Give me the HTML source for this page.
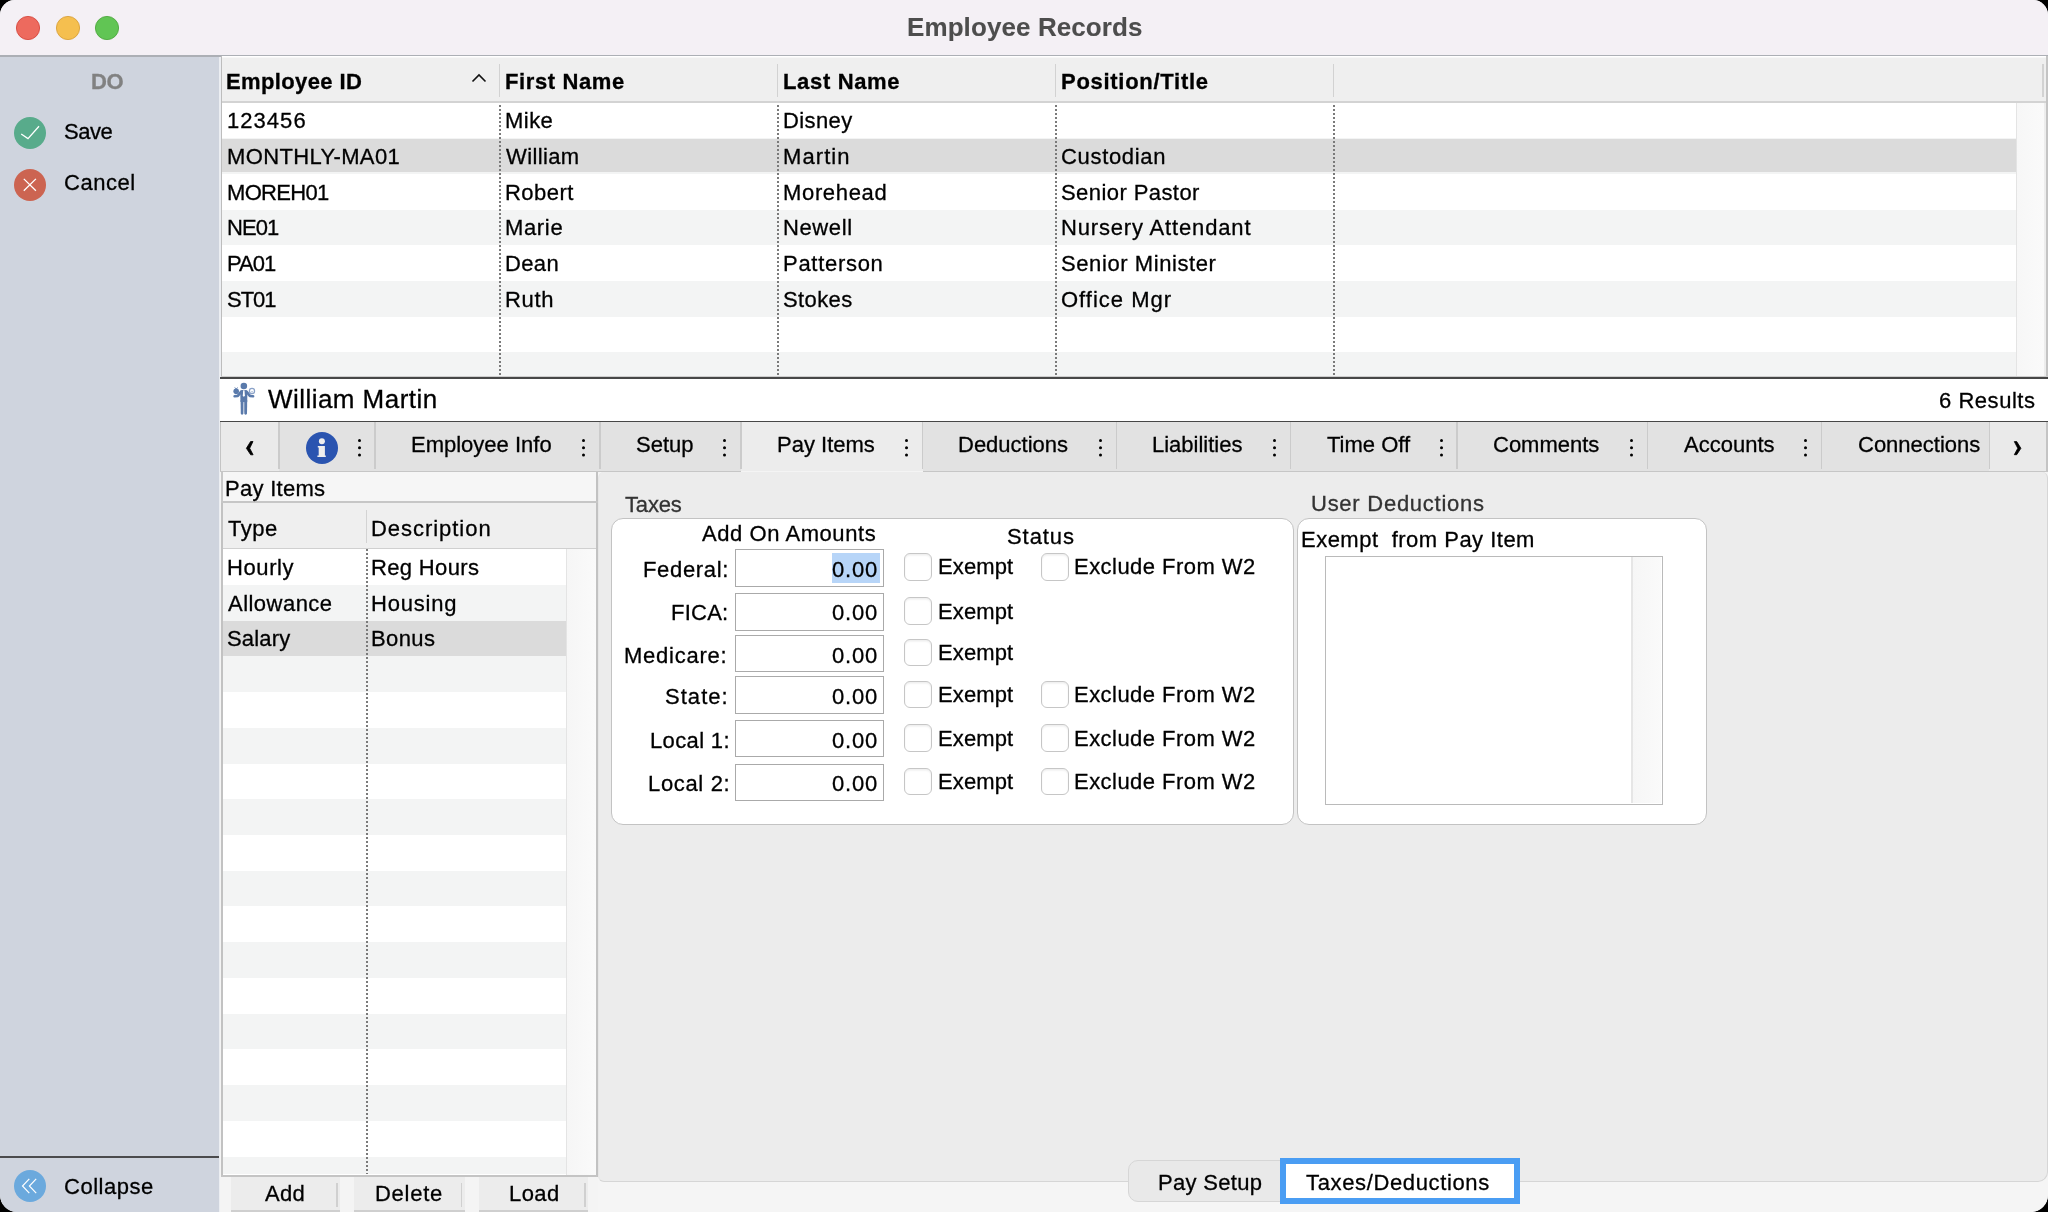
<!DOCTYPE html>
<html><head><meta charset="utf-8">
<style>
*{box-sizing:border-box;margin:0;padding:0}
html,body{width:2048px;height:1212px;overflow:hidden;background:#000}
body{font-family:"Liberation Sans",sans-serif;font-size:22px;color:#000;position:relative}
.a{position:absolute}
.t{position:absolute;white-space:nowrap;line-height:1.15;-webkit-text-stroke:0.3px currentColor;will-change:transform}
#win{position:absolute;left:0;top:0;width:2048px;height:1212px;border-radius:15px 15px 17px 17px;overflow:hidden;background:#f4f4f4}
.dots{position:absolute;width:3px;height:3px;border-radius:50%;background:#000;box-shadow:0 7.2px 0 #000,0 14.4px 0 #000}
.vd{position:absolute;width:2px;background-image:linear-gradient(to bottom,#7a7a7a 0,#7a7a7a 2px,transparent 2px);background-size:2px 4px}
.cb{position:absolute;width:27.6px;height:27.6px;border-radius:6px;background:#fff;border:1px solid #c6c6c6;box-shadow:inset 0 1.5px 2px rgba(0,0,0,0.07)}
</style></head><body>
<div id="win">
<div class="a" style="left:0.00px;top:0.00px;width:2048.00px;height:56.00px;background:#f4f0f5"></div>
<div class="a" style="left:0.00px;top:55.30px;width:2048.00px;height:1.60px;background:#acafb5"></div>
<svg class="a" style="left:14.90px;top:15px" width="26" height="26" viewBox="0 0 26 26"><circle cx="13" cy="13" r="11.6" fill="#ed6a5e" stroke="#d6493f" stroke-width="0.9"/></svg>
<svg class="a" style="left:54.60px;top:15px" width="26" height="26" viewBox="0 0 26 26"><circle cx="13" cy="13" r="11.6" fill="#f5bf4f" stroke="#d9a23c" stroke-width="0.9"/></svg>
<svg class="a" style="left:94.20px;top:15px" width="26" height="26" viewBox="0 0 26 26"><circle cx="13" cy="13" r="11.6" fill="#61c554" stroke="#4fa83f" stroke-width="0.9"/></svg>
<div class="t" style="left:906.80px;top:12.64px;font-size:26px;font-weight:700;color:#4d4d4d;letter-spacing:0.093px;-webkit-text-stroke:0.1px currentColor">Employee Records</div>
<div class="a" style="left:0.00px;top:57.00px;width:219.00px;height:1155.00px;background:#cfd4de"></div>
<div class="a" style="left:219.00px;top:57.00px;width:2.00px;height:1155.00px;background:#eceef2"></div>
<div class="t" style="left:91.40px;top:68.73px;font-size:22px;font-weight:700;color:#818181;letter-spacing:-0.300px;">DO</div>
<svg class="a" style="left:14px;top:117px" width="32" height="32" viewBox="0 0 32 32"><circle cx="16" cy="16" r="16" fill="#58ab8b"/><path d="M7.2 17 L14 21.6 L25 9.2" fill="none" stroke="#fff" stroke-width="1.3"/></svg>
<div class="t" style="left:63.70px;top:118.93px;font-size:22px;font-weight:400;color:#000;letter-spacing:-0.500px;">Save</div>
<svg class="a" style="left:14px;top:168.5px" width="32" height="32" viewBox="0 0 32 32"><circle cx="16" cy="16" r="16" fill="#cc6451"/><path d="M9.8 9.9 L21.9 21.8 M21.9 9.9 L9.8 21.8" fill="none" stroke="#fff" stroke-width="1.3"/></svg>
<div class="t" style="left:63.70px;top:170.43px;font-size:22px;font-weight:400;color:#000;letter-spacing:0.540px;">Cancel</div>
<div class="a" style="left:0.00px;top:1156.00px;width:219.00px;height:2.00px;background:#4b4b4d"></div>
<svg class="a" style="left:14px;top:1170px" width="32" height="32" viewBox="0 0 32 32"><circle cx="16" cy="16" r="16" fill="#6ba9dd"/><path d="M15.3 8.8 L8.5 16 L15.3 23.2 M22.2 8.8 L15.4 16 L22.2 23.2" fill="none" stroke="#fff" stroke-width="1.2"/></svg>
<div class="t" style="left:63.60px;top:1173.73px;font-size:22px;font-weight:400;color:#000;letter-spacing:0.514px;">Collapse</div>
<div class="a" style="left:220.50px;top:56.00px;width:1827.50px;height:321.00px;background:#fff"></div>
<div class="a" style="left:220.50px;top:57.00px;width:1827.50px;height:44.50px;background:#efefef"></div>
<div class="a" style="left:220.50px;top:57.00px;width:1827.50px;height:1.20px;background:#f7f7f7"></div>
<div class="a" style="left:220.50px;top:101.00px;width:1827.50px;height:1.50px;background:#d3d3d3"></div>
<div class="a" style="left:220.50px;top:56.00px;width:1.50px;height:321.00px;background:#bdbdbd"></div>
<div class="a" style="left:2044.00px;top:102.50px;width:2.00px;height:274.50px;background:#ededed"></div>
<div class="a" style="left:2046.00px;top:56.00px;width:2.00px;height:321.00px;background:#c4c4c4"></div>
<div class="a" style="left:498.90px;top:64.00px;width:1.50px;height:33.00px;background:#d2d2d2"></div>
<div class="a" style="left:776.80px;top:64.00px;width:1.50px;height:33.00px;background:#d2d2d2"></div>
<div class="a" style="left:1054.90px;top:64.00px;width:1.50px;height:33.00px;background:#d2d2d2"></div>
<div class="a" style="left:1332.80px;top:64.00px;width:1.50px;height:33.00px;background:#d2d2d2"></div>
<div class="a" style="left:2042.00px;top:64.00px;width:1.50px;height:33.00px;background:#d2d2d2"></div>
<div class="t" style="left:226.30px;top:68.53px;font-size:22px;font-weight:700;color:#000;letter-spacing:0.380px;">Employee ID</div>
<div class="t" style="left:504.90px;top:68.53px;font-size:22px;font-weight:700;color:#000;letter-spacing:0.611px;">First Name</div>
<div class="t" style="left:782.60px;top:68.53px;font-size:22px;font-weight:700;color:#000;letter-spacing:0.662px;">Last Name</div>
<div class="t" style="left:1060.80px;top:68.53px;font-size:22px;font-weight:700;color:#000;letter-spacing:0.715px;">Position/Title</div>
<svg class="a" style="left:471px;top:73px" width="16" height="10" viewBox="0 0 16 10"><path d="M1.5 8.5 L8 2 L14.5 8.5" fill="none" stroke="#111" stroke-width="1.6"/></svg>
<div class="a" style="left:222.00px;top:102.50px;width:1794.50px;height:35.70px;background:#ffffff"></div>
<div class="t" style="left:226.50px;top:108.33px;font-size:22px;font-weight:400;color:#000;letter-spacing:1.040px;">123456</div>
<div class="t" style="left:504.90px;top:108.33px;font-size:22px;font-weight:400;color:#000;letter-spacing:0.467px;">Mike</div>
<div class="t" style="left:782.60px;top:108.33px;font-size:22px;font-weight:400;color:#000;letter-spacing:0.400px;">Disney</div>
<div class="a" style="left:222.00px;top:138.20px;width:1794.50px;height:35.70px;background:#f3f4f4"></div>
<div class="a" style="left:222.00px;top:139.00px;width:1794.50px;height:33.40px;background:#dbdbdb"></div>
<div class="t" style="left:226.50px;top:144.03px;font-size:22px;font-weight:400;color:#000;letter-spacing:0.364px;">MONTHLY-MA01</div>
<div class="t" style="left:505.90px;top:144.03px;font-size:22px;font-weight:400;color:#000;letter-spacing:0.367px;">William</div>
<div class="t" style="left:782.60px;top:144.03px;font-size:22px;font-weight:400;color:#000;letter-spacing:1.080px;">Martin</div>
<div class="t" style="left:1060.80px;top:144.03px;font-size:22px;font-weight:400;color:#000;letter-spacing:0.675px;">Custodian</div>
<div class="a" style="left:222.00px;top:173.90px;width:1794.50px;height:35.70px;background:#ffffff"></div>
<div class="t" style="left:226.50px;top:179.73px;font-size:22px;font-weight:400;color:#000;letter-spacing:-0.683px;">MOREH01</div>
<div class="t" style="left:504.90px;top:179.73px;font-size:22px;font-weight:400;color:#000;letter-spacing:0.460px;">Robert</div>
<div class="t" style="left:782.60px;top:179.73px;font-size:22px;font-weight:400;color:#000;letter-spacing:0.657px;">Morehead</div>
<div class="t" style="left:1060.80px;top:179.73px;font-size:22px;font-weight:400;color:#000;letter-spacing:0.425px;">Senior Pastor</div>
<div class="a" style="left:222.00px;top:209.60px;width:1794.50px;height:35.70px;background:#f3f4f4"></div>
<div class="t" style="left:226.50px;top:215.43px;font-size:22px;font-weight:400;color:#000;letter-spacing:-0.967px;">NE01</div>
<div class="t" style="left:504.90px;top:215.43px;font-size:22px;font-weight:400;color:#000;letter-spacing:0.650px;">Marie</div>
<div class="t" style="left:782.60px;top:215.43px;font-size:22px;font-weight:400;color:#000;letter-spacing:0.600px;">Newell</div>
<div class="t" style="left:1060.80px;top:215.43px;font-size:22px;font-weight:400;color:#000;letter-spacing:0.838px;">Nursery Attendant</div>
<div class="a" style="left:222.00px;top:245.30px;width:1794.50px;height:35.70px;background:#ffffff"></div>
<div class="t" style="left:226.50px;top:251.13px;font-size:22px;font-weight:400;color:#000;letter-spacing:-1.000px;">PA01</div>
<div class="t" style="left:504.90px;top:251.13px;font-size:22px;font-weight:400;color:#000;letter-spacing:0.367px;">Dean</div>
<div class="t" style="left:782.60px;top:251.13px;font-size:22px;font-weight:400;color:#000;letter-spacing:0.706px;">Patterson</div>
<div class="t" style="left:1060.80px;top:251.13px;font-size:22px;font-weight:400;color:#000;letter-spacing:0.586px;">Senior Minister</div>
<div class="a" style="left:222.00px;top:281.00px;width:1794.50px;height:35.70px;background:#f3f4f4"></div>
<div class="t" style="left:226.50px;top:286.83px;font-size:22px;font-weight:400;color:#000;letter-spacing:-1.000px;">ST01</div>
<div class="t" style="left:504.90px;top:286.83px;font-size:22px;font-weight:400;color:#000;letter-spacing:0.633px;">Ruth</div>
<div class="t" style="left:782.60px;top:286.83px;font-size:22px;font-weight:400;color:#000;letter-spacing:0.400px;">Stokes</div>
<div class="t" style="left:1060.80px;top:286.83px;font-size:22px;font-weight:400;color:#000;letter-spacing:1.000px;">Office Mgr</div>
<div class="a" style="left:222.00px;top:316.70px;width:1794.50px;height:35.70px;background:#ffffff"></div>
<div class="a" style="left:222.00px;top:352.40px;width:1794.50px;height:24.60px;background:#f3f4f4"></div>
<div class="vd" style="left:498.5px;top:105px;height:272px"></div>
<div class="vd" style="left:776.5px;top:105px;height:272px"></div>
<div class="vd" style="left:1054.5px;top:105px;height:272px"></div>
<div class="vd" style="left:1332.5px;top:105px;height:272px"></div>
<div class="a" style="left:2016.50px;top:102.50px;width:27.50px;height:274.50px;background:linear-gradient(to right,#f7f7f7,#fafafa)"></div>
<div class="a" style="left:2016.00px;top:102.50px;width:1.20px;height:274.50px;background:#e4e4e4"></div>
<div class="a" style="left:220.50px;top:375.50px;width:1827.50px;height:1.40px;background:#cdcdcd"></div>
<div class="a" style="left:219.50px;top:376.80px;width:1828.50px;height:2.00px;background:#474747"></div>
<div class="a" style="left:219.50px;top:378.80px;width:1828.50px;height:42.00px;background:#fff"></div>
<div class="a" style="left:219.50px;top:420.60px;width:1828.50px;height:2.00px;background:#474747"></div>
<svg class="a" style="left:228px;top:380px" width="34" height="38" viewBox="0 0 34 38">
<g fill="#5a7aab">
<circle cx="15.85" cy="6" r="3.3"/>
<path d="M12.2 12.2 Q12.2 10 14.4 10 L17.3 10 Q19.4 10 19.4 12.2 L19.2 22 L12.5 22 Z"/>
<path d="M12.6 20 L15.5 20 L15.4 33.8 Q14 35.6 12.8 33.8 Z"/>
<path d="M16.2 20 L19.2 20 L19 33.8 Q17.7 35.6 16.3 33.8 Z"/>
<circle cx="8.2" cy="11.3" r="2.8"/>
<path d="M6.6 7.6 L8.2 8.8 L9.8 7.6" fill="none" stroke="#5a7aab" stroke-width="0.9"/>
</g>
<path d="M13.2 11.6 L9.8 15.9 L6.6 16.3 M18.5 11.6 L21.9 15.9 L25.1 16.3" fill="none" stroke="#5a7aab" stroke-width="2.6" stroke-linecap="round" stroke-linejoin="round"/>
<path d="M15.2 10.3 L16.5 10.3 L16.9 15.6 L15.85 17.1 L14.8 15.6 Z" fill="#fff"/>
<circle cx="24" cy="10.9" r="2.6" fill="none" stroke="#8aa2c8" stroke-width="1.2"/>
<path d="M23.2 11.6 L24.1 12.1 L25.2 11.2" fill="none" stroke="#8aa2c8" stroke-width="0.8"/>
</svg>
<div class="t" style="left:268.40px;top:384.84px;font-size:26px;font-weight:400;color:#000;letter-spacing:0.454px;">William Martin</div>
<div class="t" style="left:1938.70px;top:388.43px;font-size:22px;font-weight:400;color:#000;letter-spacing:0.537px;">6 Results</div>
<div class="a" style="left:219.50px;top:422.40px;width:1828.50px;height:48.60px;background:#e2e2e2"></div>
<div class="a" style="left:219.50px;top:422.40px;width:1.50px;height:48.60px;background:#c4c4c4"></div>
<div class="a" style="left:221.00px;top:422.40px;width:58.00px;height:48.60px;background:#eaeaea"></div>
<div class="a" style="left:279.00px;top:422.40px;width:96.00px;height:48.60px;background:#e2e2e2"></div>
<div class="a" style="left:375.00px;top:422.40px;width:225.00px;height:48.60px;background:#e2e2e2"></div>
<div class="a" style="left:600.00px;top:422.40px;width:141.00px;height:48.60px;background:#e2e2e2"></div>
<div class="a" style="left:741.00px;top:422.40px;width:181.50px;height:48.60px;background:#ececec"></div>
<div class="a" style="left:922.50px;top:422.40px;width:194.00px;height:48.60px;background:#e2e2e2"></div>
<div class="a" style="left:1116.50px;top:422.40px;width:173.80px;height:48.60px;background:#e2e2e2"></div>
<div class="a" style="left:1290.30px;top:422.40px;width:166.70px;height:48.60px;background:#e2e2e2"></div>
<div class="a" style="left:1457.00px;top:422.40px;width:190.70px;height:48.60px;background:#e2e2e2"></div>
<div class="a" style="left:1647.70px;top:422.40px;width:173.70px;height:48.60px;background:#e2e2e2"></div>
<div class="a" style="left:1821.40px;top:422.40px;width:167.90px;height:48.60px;background:#e2e2e2"></div>
<div class="a" style="left:1989.30px;top:422.40px;width:56.70px;height:48.60px;background:#eaeaea"></div>
<div class="a" style="left:278.25px;top:422.40px;width:1.50px;height:47.10px;background:#cbcbcb"></div>
<div class="a" style="left:374.25px;top:422.40px;width:1.50px;height:47.10px;background:#cbcbcb"></div>
<div class="a" style="left:599.25px;top:422.40px;width:1.50px;height:47.10px;background:#cbcbcb"></div>
<div class="a" style="left:740.25px;top:422.40px;width:1.50px;height:47.10px;background:#cbcbcb"></div>
<div class="a" style="left:921.75px;top:422.40px;width:1.50px;height:47.10px;background:#cbcbcb"></div>
<div class="a" style="left:1115.75px;top:422.40px;width:1.50px;height:47.10px;background:#cbcbcb"></div>
<div class="a" style="left:1289.55px;top:422.40px;width:1.50px;height:47.10px;background:#cbcbcb"></div>
<div class="a" style="left:1456.25px;top:422.40px;width:1.50px;height:47.10px;background:#cbcbcb"></div>
<div class="a" style="left:1646.95px;top:422.40px;width:1.50px;height:47.10px;background:#cbcbcb"></div>
<div class="a" style="left:1820.65px;top:422.40px;width:1.50px;height:47.10px;background:#cbcbcb"></div>
<div class="a" style="left:1988.55px;top:422.40px;width:1.50px;height:47.10px;background:#cbcbcb"></div>
<div class="a" style="left:2045.50px;top:422.40px;width:2.50px;height:48.60px;background:#c4c4c4"></div>
<div class="a" style="left:219.50px;top:470.50px;width:521.50px;height:1.80px;background:#c6c6c6"></div>
<div class="a" style="left:922.50px;top:470.50px;width:1125.50px;height:1.80px;background:#c6c6c6"></div>
<svg class="a" style="left:236px;top:430px" width="30" height="36" viewBox="0 0 30 36"><path d="M14.6 11.5 L17.0 11.5 L13.7 18.3 L17.1 24.8 L14.7 24.8 L10.4 18.3 Z" fill="#000" stroke="#000" stroke-width="0.8" stroke-linejoin="round"/></svg>
<svg class="a" style="left:2003px;top:430px" width="30" height="36" viewBox="0 0 30 36"><path d="M11.3 11.6 L13.7 11.6 L17.9 18.3 L13.7 24.7 L11.3 24.7 L14.8 18.3 Z" fill="#000" stroke="#000" stroke-width="0.8" stroke-linejoin="round"/></svg>
<svg class="a" style="left:306px;top:432px" width="32" height="32" viewBox="0 0 32 32"><circle cx="16" cy="16" r="16" fill="#2a54b0"/><circle cx="15.9" cy="9.3" r="3" fill="#eee"/><path d="M11.8 14 L18.9 14 L18.9 23.4 L19.8 23.4 L19.8 25 L11.4 25 L11.4 23.4 L12.7 23.4 L12.7 15.6 L11.8 15.6 Z" fill="#eee"/></svg>
<div class="dots" style="left:358.10px;top:438.90px"></div>
<div class="dots" style="left:581.50px;top:438.90px"></div>
<div class="dots" style="left:723.10px;top:438.90px"></div>
<div class="dots" style="left:905.10px;top:438.90px"></div>
<div class="dots" style="left:1098.50px;top:438.90px"></div>
<div class="dots" style="left:1272.90px;top:438.90px"></div>
<div class="dots" style="left:1439.50px;top:438.90px"></div>
<div class="dots" style="left:1629.50px;top:438.90px"></div>
<div class="dots" style="left:1804.10px;top:438.90px"></div>
<div class="t" style="left:411.00px;top:432.13px;font-size:22px;font-weight:400;color:#000;">Employee Info</div>
<div class="t" style="left:635.50px;top:432.13px;font-size:22px;font-weight:400;color:#000;">Setup</div>
<div class="t" style="left:777.00px;top:432.13px;font-size:22px;font-weight:400;color:#000;">Pay Items</div>
<div class="t" style="left:958.00px;top:432.13px;font-size:22px;font-weight:400;color:#000;">Deductions</div>
<div class="t" style="left:1151.50px;top:432.13px;font-size:22px;font-weight:400;color:#000;">Liabilities</div>
<div class="t" style="left:1326.50px;top:432.13px;font-size:22px;font-weight:400;color:#000;">Time Off</div>
<div class="t" style="left:1493.00px;top:432.13px;font-size:22px;font-weight:400;color:#000;">Comments</div>
<div class="t" style="left:1683.50px;top:432.13px;font-size:22px;font-weight:400;color:#000;">Accounts</div>
<div class="t" style="left:1857.50px;top:432.13px;font-size:22px;font-weight:400;color:#000;">Connections</div>
<div class="a" style="left:220.00px;top:472.00px;width:377.50px;height:740.00px;background:#f4f4f4"></div>
<div class="a" style="left:221.00px;top:472.00px;width:376.50px;height:29.00px;background:#f6f6f6"></div>
<div class="a" style="left:221.00px;top:472.00px;width:1.50px;height:29.00px;background:#c8c8c8"></div>
<div class="a" style="left:596.00px;top:472.00px;width:1.50px;height:29.00px;background:#c2c2c2"></div>
<div class="a" style="left:221.00px;top:500.50px;width:376.50px;height:2.00px;background:#c6c6c6"></div>
<div class="t" style="left:224.50px;top:475.53px;font-size:22px;font-weight:400;color:#000;letter-spacing:0.288px;">Pay Items</div>
<div class="a" style="left:221.00px;top:502.50px;width:375.50px;height:674.00px;background:#fff"></div>
<div class="a" style="left:221.00px;top:503.00px;width:375.50px;height:45.00px;background:#efefef"></div>
<div class="a" style="left:221.00px;top:547.50px;width:375.50px;height:1.50px;background:#d0d0d0"></div>
<div class="a" style="left:221.00px;top:502.50px;width:1.50px;height:674.00px;background:#c2c2c2"></div>
<div class="a" style="left:596.00px;top:502.50px;width:1.50px;height:674.00px;background:#c2c2c2"></div>
<div class="a" style="left:221.00px;top:1174.50px;width:375.50px;height:2.00px;background:#c4c4c4"></div>
<div class="a" style="left:365.50px;top:510.00px;width:1.50px;height:33.00px;background:#d3d3d3"></div>
<div class="t" style="left:227.50px;top:515.73px;font-size:22px;font-weight:400;color:#000;letter-spacing:0.500px;">Type</div>
<div class="t" style="left:371.30px;top:515.73px;font-size:22px;font-weight:400;color:#000;letter-spacing:0.960px;">Description</div>
<div class="a" style="left:222.50px;top:549.30px;width:344.00px;height:35.72px;background:#ffffff"></div>
<div class="t" style="left:226.50px;top:554.93px;font-size:22px;font-weight:400;color:#000;letter-spacing:0.600px;">Hourly</div>
<div class="t" style="left:371.30px;top:554.93px;font-size:22px;font-weight:400;color:#000;letter-spacing:0.350px;">Reg Hours</div>
<div class="a" style="left:222.50px;top:585.02px;width:344.00px;height:35.72px;background:#f3f4f4"></div>
<div class="t" style="left:227.50px;top:590.65px;font-size:22px;font-weight:400;color:#000;letter-spacing:0.475px;">Allowance</div>
<div class="t" style="left:371.30px;top:590.65px;font-size:22px;font-weight:400;color:#000;letter-spacing:0.783px;">Housing</div>
<div class="a" style="left:222.50px;top:620.74px;width:344.00px;height:35.72px;background:#dbdbdb"></div>
<div class="t" style="left:226.50px;top:626.37px;font-size:22px;font-weight:400;color:#000;letter-spacing:0.180px;">Salary</div>
<div class="t" style="left:371.30px;top:626.37px;font-size:22px;font-weight:400;color:#000;letter-spacing:0.375px;">Bonus</div>
<div class="a" style="left:222.50px;top:656.46px;width:344.00px;height:35.72px;background:#f3f4f4"></div>
<div class="a" style="left:222.50px;top:692.18px;width:344.00px;height:35.72px;background:#ffffff"></div>
<div class="a" style="left:222.50px;top:727.90px;width:344.00px;height:35.72px;background:#f3f4f4"></div>
<div class="a" style="left:222.50px;top:763.62px;width:344.00px;height:35.72px;background:#ffffff"></div>
<div class="a" style="left:222.50px;top:799.34px;width:344.00px;height:35.72px;background:#f3f4f4"></div>
<div class="a" style="left:222.50px;top:835.06px;width:344.00px;height:35.72px;background:#ffffff"></div>
<div class="a" style="left:222.50px;top:870.78px;width:344.00px;height:35.72px;background:#f3f4f4"></div>
<div class="a" style="left:222.50px;top:906.50px;width:344.00px;height:35.72px;background:#ffffff"></div>
<div class="a" style="left:222.50px;top:942.22px;width:344.00px;height:35.72px;background:#f3f4f4"></div>
<div class="a" style="left:222.50px;top:977.94px;width:344.00px;height:35.72px;background:#ffffff"></div>
<div class="a" style="left:222.50px;top:1013.66px;width:344.00px;height:35.72px;background:#f3f4f4"></div>
<div class="a" style="left:222.50px;top:1049.38px;width:344.00px;height:35.72px;background:#ffffff"></div>
<div class="a" style="left:222.50px;top:1085.10px;width:344.00px;height:35.72px;background:#f3f4f4"></div>
<div class="a" style="left:222.50px;top:1120.82px;width:344.00px;height:35.72px;background:#ffffff"></div>
<div class="a" style="left:222.50px;top:1156.54px;width:344.00px;height:17.96px;background:#f3f4f4"></div>
<div class="vd" style="left:365.5px;top:549px;height:625px"></div>
<div class="a" style="left:566.50px;top:549.00px;width:29.50px;height:625.50px;background:linear-gradient(to right,#f6f6f6,#fafafa)"></div>
<div class="a" style="left:566.00px;top:549.00px;width:1.20px;height:625.50px;background:#e4e4e4"></div>
<div class="a" style="left:230.60px;top:1176.60px;width:109.40px;height:36.00px;background:#ececec"></div>
<div class="a" style="left:336.00px;top:1182.50px;width:1.50px;height:24.00px;background:#d0d0d0"></div>
<div class="a" style="left:230.60px;top:1209.50px;width:109.40px;height:2.50px;background:#cfcfcf"></div>
<div class="t" style="left:265.40px;top:1181.33px;font-size:22px;font-weight:400;color:#000;letter-spacing:0.250px;">Add</div>
<div class="a" style="left:353.70px;top:1176.60px;width:110.90px;height:36.00px;background:#ececec"></div>
<div class="a" style="left:460.60px;top:1182.50px;width:1.50px;height:24.00px;background:#d0d0d0"></div>
<div class="a" style="left:353.70px;top:1209.50px;width:110.90px;height:2.50px;background:#cfcfcf"></div>
<div class="t" style="left:375.00px;top:1181.33px;font-size:22px;font-weight:400;color:#000;letter-spacing:0.720px;">Delete</div>
<div class="a" style="left:479.00px;top:1176.60px;width:109.00px;height:36.00px;background:#ececec"></div>
<div class="a" style="left:584.00px;top:1182.50px;width:1.50px;height:24.00px;background:#d0d0d0"></div>
<div class="a" style="left:479.00px;top:1209.50px;width:109.00px;height:2.50px;background:#cfcfcf"></div>
<div class="t" style="left:508.50px;top:1181.33px;font-size:22px;font-weight:400;color:#000;letter-spacing:0.433px;">Load</div>
<div class="a" style="left:598.00px;top:1176.00px;width:1450.00px;height:36.00px;background:#f5f5f5"></div>
<div class="a" style="left:597.50px;top:472.00px;width:1450.50px;height:710.00px;background:#ececec;border:1.2px solid #d6d6d6;border-top:none;border-left:1px solid #e6e6e6;border-radius:6px 6px 10px 6px"></div>
<div class="t" style="left:625.00px;top:491.73px;font-size:22px;font-weight:400;color:#333;letter-spacing:-0.175px;">Taxes</div>
<div class="t" style="left:1311.00px;top:490.93px;font-size:22px;font-weight:400;color:#333;letter-spacing:0.743px;">User Deductions</div>
<div class="a" style="left:610.50px;top:518.00px;width:683.00px;height:307.00px;background:#fff;border:1.3px solid #c3c3c3;border-radius:12px"></div>
<div class="a" style="left:1297.00px;top:518.00px;width:409.50px;height:307.00px;background:#fff;border:1.3px solid #c3c3c3;border-radius:12px"></div>
<div class="t" style="left:701.80px;top:521.23px;font-size:22px;font-weight:400;color:#000;letter-spacing:0.562px;">Add On Amounts</div>
<div class="t" style="left:1006.70px;top:524.03px;font-size:22px;font-weight:400;color:#000;letter-spacing:0.920px;">Status</div>
<div class="a" style="left:735.00px;top:549.00px;width:149.00px;height:38.00px;background:#fff;border:1.3px solid #aaaaaa"></div>
<div class="t" style="left:643.40px;top:557.13px;font-size:22px;font-weight:400;color:#000;letter-spacing:0.671px;">Federal:</div>
<div class="a" style="left:832.30px;top:553.30px;width:47.70px;height:29.50px;background:#b7d5f8"></div>
<div class="t" style="left:832.30px;top:557.13px;font-size:22px;font-weight:400;color:#000;letter-spacing:0.833px;">0.00</div>
<div class="cb" style="left:904.2px;top:553.10px"></div>
<div class="t" style="left:938.20px;top:554.43px;font-size:22px;font-weight:400;color:#000;letter-spacing:0.120px;">Exempt</div>
<div class="cb" style="left:1041.1px;top:553.10px"></div>
<div class="t" style="left:1074.00px;top:554.43px;font-size:22px;font-weight:400;color:#000;letter-spacing:0.464px;">Exclude From W2</div>
<div class="a" style="left:735.00px;top:593.00px;width:149.00px;height:37.50px;background:#fff;border:1.3px solid #aaaaaa"></div>
<div class="t" style="left:670.80px;top:599.83px;font-size:22px;font-weight:400;color:#000;letter-spacing:0.250px;">FICA:</div>
<div class="t" style="left:832.30px;top:599.83px;font-size:22px;font-weight:400;color:#000;letter-spacing:0.833px;">0.00</div>
<div class="cb" style="left:904.2px;top:597.20px"></div>
<div class="t" style="left:938.20px;top:598.53px;font-size:22px;font-weight:400;color:#000;letter-spacing:0.120px;">Exempt</div>
<div class="a" style="left:735.00px;top:635.20px;width:149.00px;height:36.40px;background:#fff;border:1.3px solid #aaaaaa"></div>
<div class="t" style="left:623.60px;top:642.53px;font-size:22px;font-weight:400;color:#000;letter-spacing:0.763px;">Medicare:</div>
<div class="t" style="left:832.30px;top:642.53px;font-size:22px;font-weight:400;color:#000;letter-spacing:0.833px;">0.00</div>
<div class="cb" style="left:904.2px;top:638.90px"></div>
<div class="t" style="left:938.20px;top:640.23px;font-size:22px;font-weight:400;color:#000;letter-spacing:0.120px;">Exempt</div>
<div class="a" style="left:735.00px;top:676.30px;width:149.00px;height:37.30px;background:#fff;border:1.3px solid #aaaaaa"></div>
<div class="t" style="left:664.60px;top:683.63px;font-size:22px;font-weight:400;color:#000;letter-spacing:1.040px;">State:</div>
<div class="t" style="left:832.30px;top:683.63px;font-size:22px;font-weight:400;color:#000;letter-spacing:0.833px;">0.00</div>
<div class="cb" style="left:904.2px;top:680.50px"></div>
<div class="t" style="left:938.20px;top:681.83px;font-size:22px;font-weight:400;color:#000;letter-spacing:0.120px;">Exempt</div>
<div class="cb" style="left:1041.1px;top:680.50px"></div>
<div class="t" style="left:1074.00px;top:681.83px;font-size:22px;font-weight:400;color:#000;letter-spacing:0.464px;">Exclude From W2</div>
<div class="a" style="left:735.00px;top:720.10px;width:149.00px;height:37.30px;background:#fff;border:1.3px solid #aaaaaa"></div>
<div class="t" style="left:649.60px;top:728.03px;font-size:22px;font-weight:400;color:#000;letter-spacing:0.357px;">Local 1:</div>
<div class="t" style="left:832.30px;top:728.03px;font-size:22px;font-weight:400;color:#000;letter-spacing:0.833px;">0.00</div>
<div class="cb" style="left:904.2px;top:724.20px"></div>
<div class="t" style="left:938.20px;top:725.53px;font-size:22px;font-weight:400;color:#000;letter-spacing:0.120px;">Exempt</div>
<div class="cb" style="left:1041.1px;top:724.20px"></div>
<div class="t" style="left:1074.00px;top:725.53px;font-size:22px;font-weight:400;color:#000;letter-spacing:0.464px;">Exclude From W2</div>
<div class="a" style="left:735.00px;top:763.80px;width:149.00px;height:36.90px;background:#fff;border:1.3px solid #aaaaaa"></div>
<div class="t" style="left:647.50px;top:770.73px;font-size:22px;font-weight:400;color:#000;letter-spacing:0.657px;">Local 2:</div>
<div class="t" style="left:832.30px;top:770.73px;font-size:22px;font-weight:400;color:#000;letter-spacing:0.833px;">0.00</div>
<div class="cb" style="left:904.2px;top:767.80px"></div>
<div class="t" style="left:938.20px;top:769.13px;font-size:22px;font-weight:400;color:#000;letter-spacing:0.120px;">Exempt</div>
<div class="cb" style="left:1041.1px;top:767.80px"></div>
<div class="t" style="left:1074.00px;top:769.13px;font-size:22px;font-weight:400;color:#000;letter-spacing:0.464px;">Exclude From W2</div>
<div class="t" style="left:1301.30px;top:526.53px;font-size:22px;font-weight:400;color:#000;letter-spacing:0.485px;">Exempt&nbsp; from Pay Item</div>
<div class="a" style="left:1325.00px;top:555.50px;width:337.50px;height:249.50px;background:#fff;border:1.8px solid #bababa"></div>
<div class="a" style="left:1631.50px;top:557.20px;width:29.00px;height:246.00px;background:linear-gradient(to right,#f6f6f6,#fafafa)"></div>
<div class="a" style="left:1631.00px;top:557.20px;width:1.50px;height:246.00px;background:#e6e6e6"></div>
<div class="a" style="left:1128.00px;top:1160.20px;width:160.00px;height:41.60px;background:#e9e9e9;border:1px solid #d6d6d6;border-radius:10px 0 0 10px"></div>
<div class="t" style="left:1157.90px;top:1169.73px;font-size:22px;font-weight:400;color:#000;letter-spacing:0.300px;">Pay Setup</div>
<div class="a" style="left:1279.70px;top:1158.00px;width:240.30px;height:46.00px;background:#fff;border:6px solid #4a9df3"></div>
<div class="t" style="left:1306.00px;top:1169.73px;font-size:22px;font-weight:400;color:#000;letter-spacing:0.640px;">Taxes/Deductions</div>
</div></body></html>
